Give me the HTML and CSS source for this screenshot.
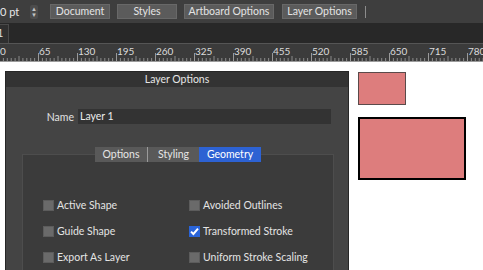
FILE: index.html
```html
<!DOCTYPE html>
<html lang="en">
<head>
  <meta charset="UTF-8" />
  <title>Layer Options</title>
  <link rel="stylesheet" href="styles.css">
</head>
<body>
  <div class="toolbar">
    <div class="unit-field">0 pt</div>
    <div class="spinner"><span>&#9650;</span><span>&#9660;</span></div>
    <button class="tool-btn btn-doc">Document</button>
    <button class="tool-btn btn-styles">Styles</button>
    <button class="tool-btn btn-artboard">Artboard Options</button>
    <button class="tool-btn btn-layer">Layer Options</button>
    <div class="sep"></div>
  </div>

  <div class="doc-tabs">
    <div class="doc-tab">1</div>
  </div>

  <div class="ruler">
    <div class="ruler-labels">
      <span>0</span><span>65</span><span>130</span><span>195</span><span>260</span>
      <span>325</span><span>390</span><span>455</span><span>520</span><span>585</span>
      <span>650</span><span>715</span><span>780</span>
    </div>
    <svg class="ruler-ticks" width="483" height="8">
      <defs>
        <pattern id="ticks" x="-1" y="0" width="39" height="8" patternUnits="userSpaceOnUse">
          <rect x="0" y="0" width="1" height="8" fill="#9a9a9a"/>
          <rect x="3.9" y="5" width="1" height="3" fill="#8a8a8a"/>
          <rect x="7.8" y="5" width="1" height="3" fill="#8a8a8a"/>
          <rect x="11.7" y="5" width="1" height="3" fill="#8a8a8a"/>
          <rect x="15.6" y="5" width="1" height="3" fill="#8a8a8a"/>
          <rect x="19.5" y="3" width="1" height="5" fill="#8a8a8a"/>
          <rect x="23.4" y="5" width="1" height="3" fill="#8a8a8a"/>
          <rect x="27.3" y="5" width="1" height="3" fill="#8a8a8a"/>
          <rect x="31.2" y="5" width="1" height="3" fill="#8a8a8a"/>
          <rect x="35.1" y="5" width="1" height="3" fill="#8a8a8a"/>
        </pattern>
      </defs>
      <rect width="483" height="8" fill="url(#ticks)"/>
    </svg>
  </div>

  <div class="workspace">
    <div class="dialog">
      <div class="dialog-title">Layer Options</div>
      <div class="dialog-body">
        <div class="name-row">
          <label class="name-label">Name</label>
          <div class="name-input">Layer 1</div>
        </div>

        <div class="tabs">
          <div class="tab">Options</div>
          <div class="tab">Styling</div>
          <div class="tab active">Geometry</div>
        </div>

        <div class="tab-panel">
          <div class="check-grid">
            <div class="check"><span class="box"></span>Active Shape</div>
            <div class="check"><span class="box"></span>Avoided Outlines</div>
            <div class="check"><span class="box"></span>Guide Shape</div>
            <div class="check"><span class="box checked">
              <svg width="11" height="11" viewBox="0 0 11 11"><path d="M2 5.6 L4.4 8 L9 2.6" fill="none" stroke="#fff" stroke-width="2"/></svg>
            </span>Transformed Stroke</div>
            <div class="check"><span class="box"></span>Export As Layer</div>
            <div class="check"><span class="box"></span>Uniform Stroke Scaling</div>
          </div>
        </div>
      </div>
    </div>

    <div class="shapes">
      <div class="shape-small"></div>
      <div class="shape-large"></div>
    </div>
  </div>
</body>
</html>
```

FILE: styles.css
```css
body {
  margin: 0;
  width: 483px;
  height: 270px;
  overflow: hidden;
  background: #ffffff;
  font-family: Lato, "Noto Sans", sans-serif;
  font-size: 10.5px;
  color: #e2e2e2;
}

.toolbar {
  height: 23px;
  background: #3e3e3e;
  display: flex;
  align-items: center;
}

.unit-field {
  width: 24px;
  height: 15px;
  line-height: 15px;
  color: #e8e8e8;
  font-size: 11px;
  margin-right: 6px;
}

.spinner {
  width: 8px;
  height: 14px;
  background: #4c4c4c;
  border-radius: 2px;
  display: flex;
  flex-direction: column;
  align-items: center;
  justify-content: center;
  font-size: 6px;
  line-height: 6px;
  color: #c4c4c4;
  margin-right: 12px;
}

.tool-btn {
  height: 15px;
  padding: 0;
  border: 1px solid #686868;
  background: #5b5b5b;
  color: #e4e4e4;
  font-family: Lato, "Noto Sans", sans-serif;
  font-size: 10.5px;
  line-height: 13px;
  margin-right: 7px;
}

.btn-doc { width: 60px; }
.btn-styles { width: 60px; }
.btn-artboard { width: 90px; margin-right: 8px; }
.btn-layer { width: 75px; margin-right: 8px; }

.sep {
  width: 1px;
  height: 12px;
  background: #8c8c8c;
}

.doc-tabs {
  height: 20px;
  background: #282828;
  border-bottom: 1px solid #555555;
  display: flex;
  align-items: flex-end;
}

.doc-tab {
  width: 8px;
  height: 18px;
  background: #2f2f2f;
  border: 1px solid #4a4a4a;
  border-left: none;
  border-bottom: none;
  color: #dddddd;
  font-size: 11px;
  line-height: 16px;
  overflow: hidden;
  text-indent: -3px;
}

.ruler {
  height: 17px;
  background: #3b3b3b;
  position: relative;
  overflow: hidden;
  border-bottom: 1px solid #9b9b9b;
}

.ruler-labels {
  display: flex;
  margin-left: -2px;
  padding-top: 2px;
}

.ruler-labels span {
  flex: 0 0 39px;
  box-sizing: border-box;
  padding-left: 2px;
  font-size: 10px;
  line-height: 11px;
  color: #dcdcdc;
}

.ruler-ticks {
  position: absolute;
  left: 0;
  bottom: 0;
}

.workspace {
  display: flex;
  align-items: flex-start;
  padding: 9px 0 0 5px;
}

.dialog {
  width: 342px;
  height: 220px;
  border: 1px solid #262626;
  background: #444444;
}

.dialog-title {
  height: 15px;
  line-height: 14px;
  background: #333333;
  text-align: center;
  color: #e6e6e6;
}

.dialog-body {
  padding: 22px 17px 0 16px;
}

.name-row {
  display: flex;
  align-items: center;
  padding-left: 18px;
}

.name-label {
  width: 34px;
  text-align: right;
  padding-right: 4px;
}

.name-input {
  flex: 1;
  height: 15px;
  line-height: 15px;
  background: #333333;
  padding-left: 2px;
  color: #ececec;
}

.tabs {
  display: flex;
  margin: 23px 0 0 73px;
  position: relative;
  z-index: 1;
}

.tab {
  height: 15px;
  line-height: 15px;
  background: #595959;
  color: #e6e6e6;
  text-align: center;
}

.tab:nth-child(1) { width: 53px; border-right: 1px solid #9a9a9a; box-sizing: border-box; }
.tab:nth-child(2) { width: 51px; }
.tab.active { width: 62px; background: #2d62d3; color: #ffffff; }

.tab-panel {
  margin: -8px 0 0 0;
  width: 310px;
  height: 120px;
  background: #3b3b3b;
  border: 1px solid #4d4d4d;
}

.check-grid {
  display: grid;
  grid-template-columns: 146px 1fr;
  row-gap: 12px;
  padding: 43px 0 0 20px;
}

.check {
  display: flex;
  align-items: center;
  height: 14px;
  color: #e4e4e4;
}

.box {
  width: 11px;
  height: 11px;
  background: #6a6a6a;
  border: 1px solid #5c5c5c;
  box-sizing: border-box;
  margin-right: 3px;
  display: flex;
}

.box.checked {
  background: #2a64d8;
  border-color: #2a64d8;
}

.box svg { margin: -1px; }

.shapes {
  display: flex;
  flex-direction: column;
  padding: 1px 0 0 9px;
}

.shape-small {
  width: 46px;
  height: 31px;
  background: #dd7d7d;
  border: 1px solid #5a4a4a;
}

.shape-large {
  width: 104px;
  height: 59px;
  margin-top: 12px;
  background: #dd7d7d;
  border: 2px solid #000000;
}
```
